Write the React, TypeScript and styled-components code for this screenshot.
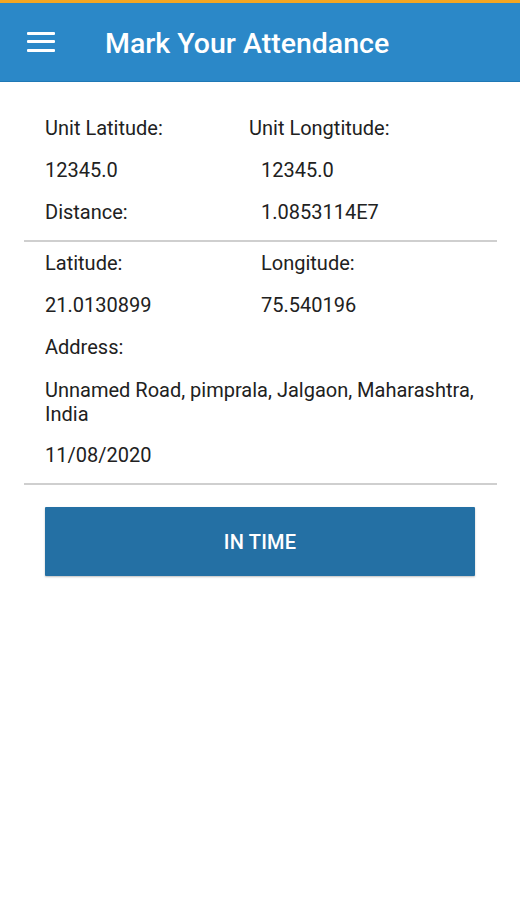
import React from "react";
import styled, { createGlobalStyle } from "styled-components";

const GlobalStyle = createGlobalStyle`
  html, body {
    margin: 0;
    padding: 0;
    background: #ffffff;
  }
  body {
    font-family: Roboto, "Noto Sans", "Liberation Sans", sans-serif;
    color: #212121;
  }
`;

const Screen = styled.div`
  width: 520px;
  min-height: 900px;
  background: #ffffff;
`;

const TopStrip = styled.div`
  height: 3px;
  background: #f3a623;
`;

const Toolbar = styled.header`
  display: flex;
  align-items: center;
  height: 78px;
  padding-left: 27px;
  background: #2b88c8;
  border-bottom: 1px solid #1f78b5;
`;

const MenuButton = styled.div`
  display: flex;
  flex-direction: column;
  justify-content: space-between;
  width: 28px;
  height: 20px;
  margin-right: 50px;
  margin-top: -1px;

  span {
    display: block;
    height: 3px;
    background: #ffffff;
    border-radius: 1px;
  }
`;

const Title = styled.h1`
  margin: 0;
  margin-top: 2px;
  font-size: 28.5px;
  font-weight: 500;
  color: #ffffff;
`;

const Section = styled.section<{ top?: number }>`
  padding: ${({ top }) => top ?? 0}px 0 7px 45px;
`;

const Row = styled.div`
  display: grid;
  grid-template-columns: 204px 1fr;
  align-items: center;
  height: 42px;
`;

const Cell = styled.div<{ shift?: number }>`
  font-size: 20px;
  line-height: 24px;
  padding-left: ${({ shift }) => shift ?? 0}px;
`;

const Address = styled.div`
  width: 440px;
  padding: 10px 0 8px 0;
  font-size: 20px;
  line-height: 24px;
`;

const Divider = styled.hr`
  margin: 0 23px 0 24px;
  height: 2px;
  border: none;
  background: #cfcfcf;
`;

const ButtonArea = styled.div`
  padding: 22px 45px 0 45px;
`;

const InTimeButton = styled.button`
  width: 430px;
  height: 69px;
  border: none;
  border-radius: 1px;
  background: #2470a4;
  color: #ffffff;
  font-family: Roboto, "Noto Sans", "Liberation Sans", sans-serif;
  font-size: 20px;
  font-weight: 500;
  letter-spacing: 0.2px;
  box-shadow: 0 1px 2px rgba(0, 0, 0, 0.25);
  cursor: pointer;
`;

const App: React.FC = () => {
  return (
    <>
      <GlobalStyle />
      <Screen>
        <TopStrip />
        <Toolbar>
          <MenuButton>
            <span />
            <span />
            <span />
          </MenuButton>
          <Title>Mark Your Attendance</Title>
        </Toolbar>

        <Section top={25}>
          <Row>
            <Cell>Unit Latitude:</Cell>
            <Cell>Unit Longtitude:</Cell>
          </Row>
          <Row>
            <Cell>12345.0</Cell>
            <Cell shift={12}>12345.0</Cell>
          </Row>
          <Row>
            <Cell>Distance:</Cell>
            <Cell shift={12}>1.0853114E7</Cell>
          </Row>
        </Section>
        <Divider />

        <Section>
          <Row>
            <Cell>Latitude:</Cell>
            <Cell shift={12}>Longitude:</Cell>
          </Row>
          <Row>
            <Cell>21.0130899</Cell>
            <Cell shift={12}>75.540196</Cell>
          </Row>
          <Row>
            <Cell>Address:</Cell>
          </Row>
          <Address>Unnamed Road, pimprala, Jalgaon, Maharashtra, India</Address>
          <Row>
            <Cell>11/08/2020</Cell>
          </Row>
        </Section>
        <Divider />

        <ButtonArea>
          <InTimeButton>IN TIME</InTimeButton>
        </ButtonArea>
      </Screen>
    </>
  );
};

export default App;
